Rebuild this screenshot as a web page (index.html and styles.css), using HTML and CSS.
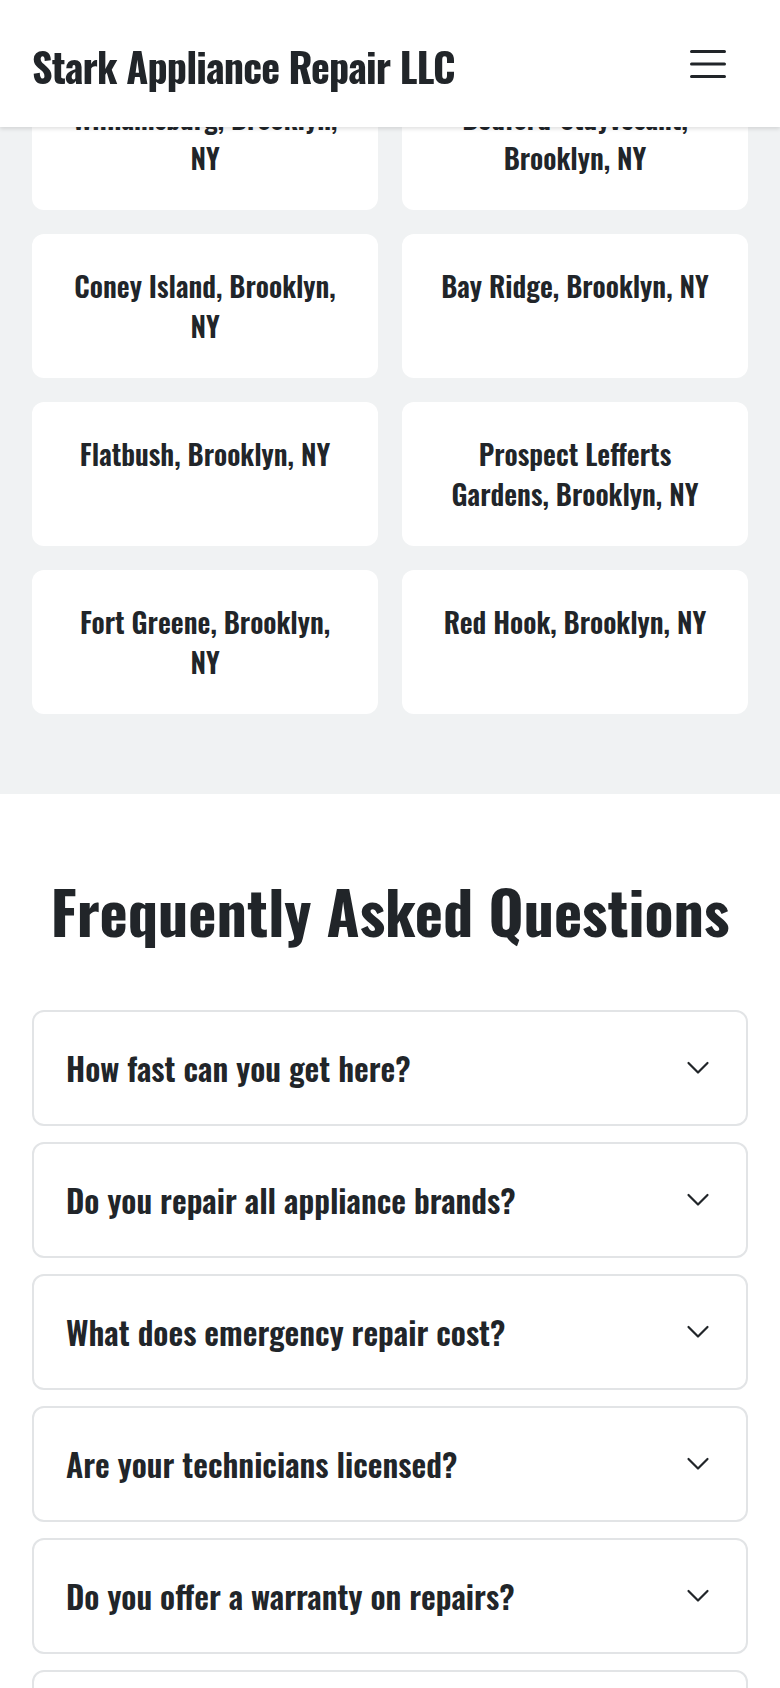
FILE: index.html
```html
<!DOCTYPE html>
<html lang="en">
<head>
    <meta charset="UTF-8">
    <meta name="viewport" content="width=device-width, initial-scale=1.0">
    <title>Stark Appliance Repair LLC</title>
    <link rel="stylesheet" href="styles.css">
</head>
<body>

    <header class="site-header">
        <a class="brand" href="#">Stark Appliance Repair LLC</a>
        <button class="menu-toggle" aria-label="Open menu">
            <svg width="36" height="30" viewBox="0 0 36 30">
                <path d="M1.5 2.5h33M1.5 15h33M1.5 27.5h33" stroke="#212529" stroke-width="3" stroke-linecap="round"/>
            </svg>
        </button>
    </header>

    <main>
        <section class="areas">
            <div class="area-grid">
                <div class="area-card">Williamsburg, Brooklyn, NY</div>
                <div class="area-card">Bedford-Stuyvesant, Brooklyn, NY</div>
                <div class="area-card">Coney Island, Brooklyn, NY</div>
                <div class="area-card">Bay Ridge, Brooklyn, NY</div>
                <div class="area-card">Flatbush, Brooklyn, NY</div>
                <div class="area-card">Prospect Lefferts Gardens, Brooklyn, NY</div>
                <div class="area-card">Fort Greene, Brooklyn, NY</div>
                <div class="area-card">Red Hook, Brooklyn, NY</div>
            </div>
        </section>

        <section class="faq">
            <h2>Frequently Asked Questions</h2>

            <div class="faq-list">
                <div class="faq-item">
                    <span>How fast can you get here?</span>
                    <svg class="chevron" width="24" height="24" viewBox="0 0 24 24"><path d="M2.5 7l9.5 9.5L21.5 7" fill="none" stroke="#212529" stroke-width="2.2" stroke-linecap="round" stroke-linejoin="round"/></svg>
                </div>
                <div class="faq-item">
                    <span>Do you repair all appliance brands?</span>
                    <svg class="chevron" width="24" height="24" viewBox="0 0 24 24"><path d="M2.5 7l9.5 9.5L21.5 7" fill="none" stroke="#212529" stroke-width="2.2" stroke-linecap="round" stroke-linejoin="round"/></svg>
                </div>
                <div class="faq-item">
                    <span>What does emergency repair cost?</span>
                    <svg class="chevron" width="24" height="24" viewBox="0 0 24 24"><path d="M2.5 7l9.5 9.5L21.5 7" fill="none" stroke="#212529" stroke-width="2.2" stroke-linecap="round" stroke-linejoin="round"/></svg>
                </div>
                <div class="faq-item">
                    <span>Are your technicians licensed?</span>
                    <svg class="chevron" width="24" height="24" viewBox="0 0 24 24"><path d="M2.5 7l9.5 9.5L21.5 7" fill="none" stroke="#212529" stroke-width="2.2" stroke-linecap="round" stroke-linejoin="round"/></svg>
                </div>
                <div class="faq-item">
                    <span>Do you offer a warranty on repairs?</span>
                    <svg class="chevron" width="24" height="24" viewBox="0 0 24 24"><path d="M2.5 7l9.5 9.5L21.5 7" fill="none" stroke="#212529" stroke-width="2.2" stroke-linecap="round" stroke-linejoin="round"/></svg>
                </div>
                <div class="faq-item">
                    <span>Do you service commercial appliances?</span>
                    <svg class="chevron" width="24" height="24" viewBox="0 0 24 24"><path d="M2.5 7l9.5 9.5L21.5 7" fill="none" stroke="#212529" stroke-width="2.2" stroke-linecap="round" stroke-linejoin="round"/></svg>
                </div>
            </div>
        </section>
    </main>

</body>
</html>
```

FILE: styles.css
```css
body {
    margin: 0;
    font-family: "Oswald", "Liberation Sans Narrow", "DejaVu Sans Condensed", "Roboto Condensed", "Liberation Sans", sans-serif;
    color: #212529;
    background-color: #fff;
}

.site-header {
    position: fixed;
    top: 0;
    left: 0;
    right: 0;
    z-index: 10;
    height: 127px;
    padding: 0 32px;
    display: flex;
    align-items: center;
    justify-content: space-between;
    background-color: #fff;
    box-shadow: 0 2px 4px rgba(0, 0, 0, 0.12);
}

.brand {
    font-size: 40px;
    font-weight: 700;
    letter-spacing: -0.02em;
    color: #212529;
    text-decoration: none;
    padding-top: 4px;
}

.menu-toggle {
    padding: 0;
    margin-right: 22px;
    border: none;
    background: none;
    display: flex;
    cursor: pointer;
}

.areas {
    background-color: #f0f2f3;
    padding: 66px 32px 80px;
}

.area-grid {
    display: grid;
    grid-template-columns: 1fr 1fr;
    gap: 24px;
}

.area-card {
    background-color: #fff;
    border-radius: 12px;
    padding: 32px;
    font-size: 28px;
    font-weight: 600;
    line-height: 40px;
    text-align: center;
}

.faq {
    padding: 80px 32px;
}

.faq h2 {
    margin: 0 0 64px;
    font-size: 60px;
    font-weight: 700;
    line-height: 72px;
    text-align: center;
}

.faq-list {
    display: flex;
    flex-direction: column;
    gap: 16px;
}

.faq-item {
    display: flex;
    align-items: center;
    justify-content: space-between;
    padding: 32px;
    border: 2px solid #e2e4e6;
    border-radius: 12px;
    font-size: 32px;
    font-weight: 600;
    line-height: 48px;
}

.chevron {
    flex-shrink: 0;
    margin-right: 4px;
}
```
